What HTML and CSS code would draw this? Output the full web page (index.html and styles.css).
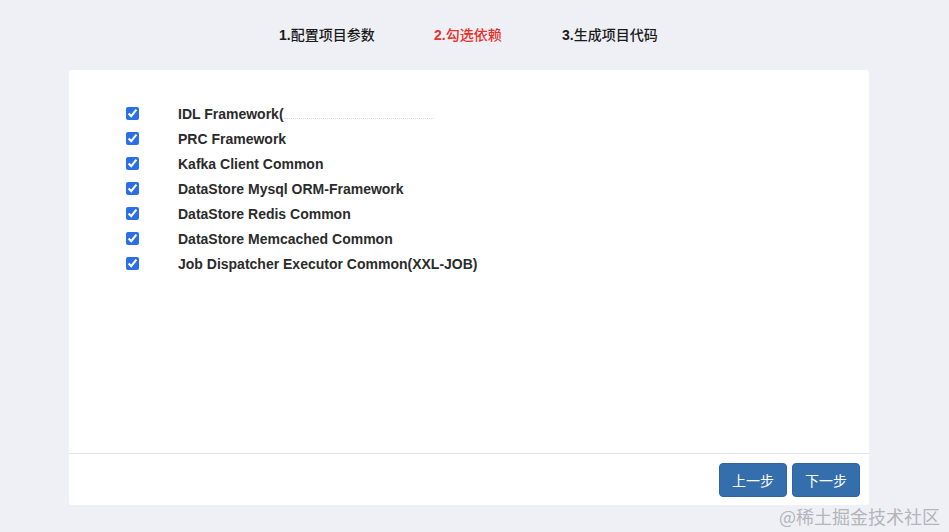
FILE: index.html
```html
<!DOCTYPE html>
<html lang="zh">
<head>
<meta charset="utf-8">
<link rel="stylesheet" href="styles.css">
</head>
<body>
<div class="page">
  <div class="steps">
    <div class="step"><b>1.</b>配置项目参数</div>
    <div class="step active"><b>2.</b>勾选依赖</div>
    <div class="step"><b>3.</b>生成项目代码</div>
  </div>
  <div class="card">
    <div class="card-body">
      <ul class="deps">
        <li><input type="checkbox" checked><span class="label">IDL Framework(</span><span class="redact"></span></li>
        <li><input type="checkbox" checked><span class="label">PRC Framework</span></li>
        <li><input type="checkbox" checked><span class="label">Kafka Client Common</span></li>
        <li><input type="checkbox" checked><span class="label">DataStore Mysql ORM-Framework</span></li>
        <li><input type="checkbox" checked><span class="label">DataStore Redis Common</span></li>
        <li><input type="checkbox" checked><span class="label">DataStore Memcached Common</span></li>
        <li><input type="checkbox" checked><span class="label">Job Dispatcher Executor Common(XXL-JOB)</span></li>
      </ul>
    </div>
    <div class="card-footer">
      <button class="btn">上一步</button>
      <button class="btn">下一步</button>
    </div>
  </div>
  <div class="watermark">@稀土掘金技术社区</div>
</div>
</body>
</html>
```
FILE: styles.css
```css
* { box-sizing: border-box; }
html, body { margin: 0; padding: 0; }
body {
  background: #eff0f5;
  font-family: "Liberation Sans", Arial, "Noto Sans CJK SC", sans-serif;
  color: #222;
  width: 949px;
  height: 532px;
  overflow: hidden;
}
.page { position: relative; height: 532px; padding-top: 23px; }
.steps {
  display: flex;
  padding-left: 279px;
  height: 22px;
  align-items: center;
  font-size: 14px;
  font-family: "Liberation Sans", "Noto Sans CJK SC", sans-serif;
  color: #1a1a1a;
}
.step { font-weight: 500; }
.step b { font-weight: bold; }
.step:nth-child(1) { width: 155px; }
.step:nth-child(2) { width: 128px; }
.step.active { color: #e8302c; }
.card {
  margin: 25px 0 0 69px;
  width: 800px;
  height: 435px;
  background: #fff;
  border-radius: 3px;
  display: flex;
  flex-direction: column;
}
.card-body { flex: 1; padding-top: 31px; }
.deps { list-style: none; margin: 0; padding: 0 0 0 57px; }
.deps li {
  display: flex;
  align-items: center;
  height: 25px;
}
.deps input {
  margin: 0;
  width: 13px;
  height: 13px;
  accent-color: #2a6fe6;
}
.label {
  margin-left: 39px;
  font-weight: bold;
  font-size: 14px;
  color: #2b2b2b;
}
.redact {
  display: inline-block;
  width: 150px;
  height: 1px;
  margin-top: 10px;
  border-top: 1px dotted #dcdcdc;
}
.card-footer {
  border-top: 1px solid #e3e3e6;
  height: 52px;
  display: flex;
  justify-content: flex-end;
  align-items: center;
  gap: 5px;
  padding-right: 9px;
}
.btn {
  width: 68px;
  height: 34px;
  background: #356eac;
  color: #fff;
  border: 1px solid #2e64a0;
  border-radius: 4px;
  font-size: 14px;
  font-family: "Noto Sans CJK SC", sans-serif;
  padding: 0;
}
.watermark {
  position: absolute;
  right: 9px;
  bottom: 4px;
  font-size: 18px;
  line-height: 24px;
  color: #b3b5ba;
  font-family: "Noto Sans CJK SC", sans-serif;
}
```
